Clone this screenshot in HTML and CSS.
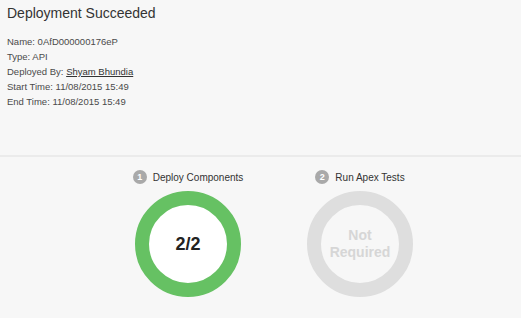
FILE: index.html
```html
<!DOCTYPE html>
<html lang="en">
<head>
    <meta charset="UTF-8">
    <title>Deployment Status</title>
    <link rel="stylesheet" href="styles.css">
</head>
<body>
    <!-- Summary -->
    <section class="summary">
        <h1 class="summary-title">Deployment Succeeded</h1>
        <ul class="summary-details">
            <li>Name: 0AfD000000176eP</li>
            <li>Type: API</li>
            <li>Deployed By: <a href="#" class="user-link">Shyam Bhundia</a></li>
            <li>Start Time: 11/08/2015 15:49</li>
            <li>End Time: 11/08/2015 15:49</li>
        </ul>
    </section>

    <!-- Steps -->
    <section class="steps">
        <div class="step">
            <div class="step-header">
                <span class="step-num">1</span>
                <span class="step-label">Deploy Components</span>
            </div>
            <div class="step-ring done">
                <span class="ring-value">2/2</span>
            </div>
        </div>
        <div class="step">
            <div class="step-header">
                <span class="step-num">2</span>
                <span class="step-label">Run Apex Tests</span>
            </div>
            <div class="step-ring skipped">
                <span class="ring-note">Not<br>Required</span>
            </div>
        </div>
    </section>
</body>
</html>
```

FILE: styles.css
```css
* {
    margin: 0;
    padding: 0;
    box-sizing: border-box;
}

body {
    font-family: "Liberation Sans", Arial, sans-serif;
    background: #f7f7f7;
    color: #444;
}

/* Summary */
.summary {
    padding: 4px 7px 0;
    height: 155px;
}

.summary-title {
    font-size: 14px;
    line-height: 18px;
    font-weight: normal;
    color: #333;
}

.summary-details {
    list-style: none;
    margin-top: 12px;
    font-size: 9.5px;
    line-height: 15px;
    color: #4a4a4a;
}

.user-link {
    color: #333;
    text-decoration: underline;
}

/* Steps */
.steps {
    border-top: 2px solid #ebebeb;
    display: flex;
    justify-content: center;
    gap: 32px;
    padding: 13px 0 0 27px;
}

.step {
    width: 140px;
    display: flex;
    flex-direction: column;
    align-items: center;
    gap: 7px;
}

.step-header {
    display: flex;
    align-items: center;
    gap: 6px;
    height: 14px;
}

.step-num {
    width: 14px;
    height: 14px;
    border-radius: 50%;
    background: #a9a9a9;
    color: #fff;
    font-size: 9px;
    font-weight: bold;
    display: flex;
    align-items: center;
    justify-content: center;
}

.step-label {
    font-size: 10px;
    color: #333;
}

.step-ring {
    width: 106px;
    height: 106px;
    border-radius: 50%;
    border: 14px solid #66c163;
    background: #fff;
    display: flex;
    align-items: center;
    justify-content: center;
    text-align: center;
}

.step-ring.skipped {
    border-color: #dedede;
    background: #f7f7f7;
}

.ring-value {
    font-size: 18px;
    font-weight: bold;
    color: #222;
}

.ring-note {
    font-size: 14px;
    line-height: 17px;
    font-weight: bold;
    color: #d6d6d6;
}
```
